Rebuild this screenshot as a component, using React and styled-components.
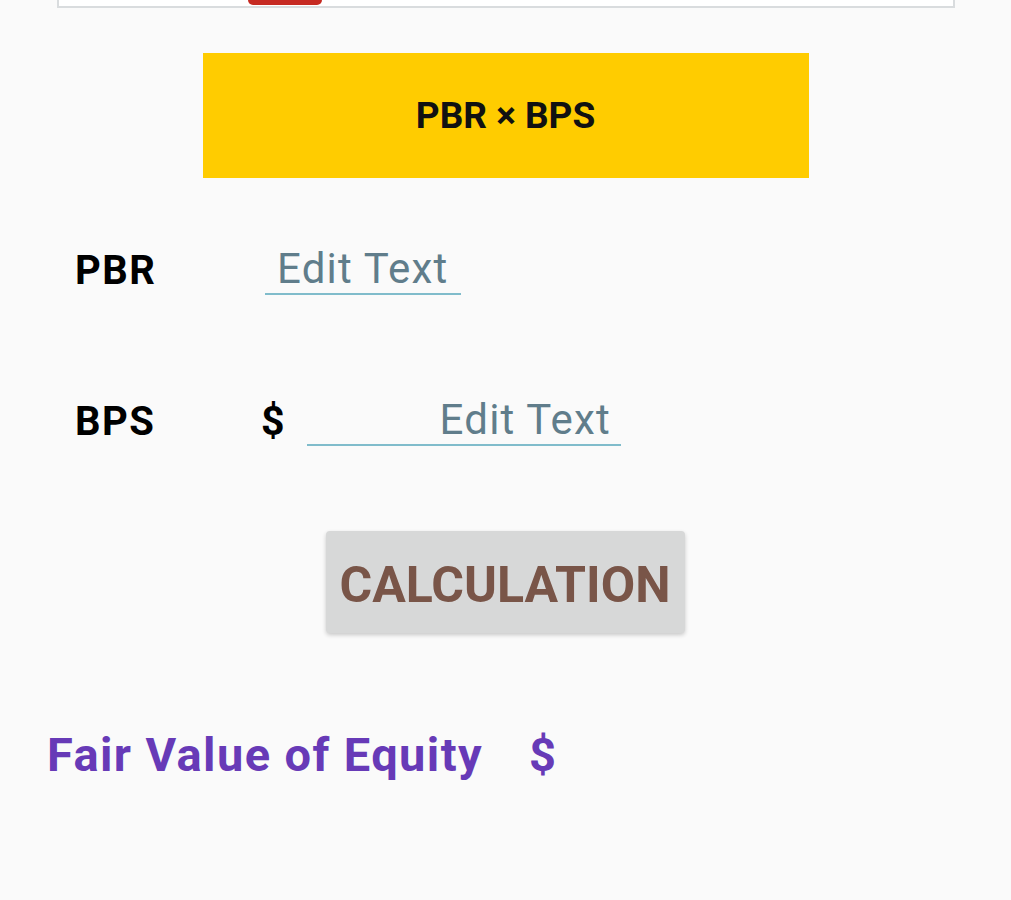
import React from "react";
import styled, { createGlobalStyle } from "styled-components";

const App = () => {
  return (
    <>
      <GlobalStyle />
      <Page>
        <TopCard>
          <RedTab />
        </TopCard>
        <Banner>PBR × BPS</Banner>
        <Row $top={67}>
          <Label $width={190}>PBR</Label>
          <Field $width={196}>Edit Text</Field>
        </Row>
        <Row $top={101}>
          <Label $width={186}>BPS</Label>
          <Dollar>$</Dollar>
          <Field $width={314} $end>
            Edit Text
          </Field>
        </Row>
        <CalcButton>CALCULATION</CalcButton>
        <Result>
          <span>Fair Value of Equity</span>
          <span>$</span>
        </Result>
      </Page>
    </>
  );
};

export default App;

// Style
const GlobalStyle = createGlobalStyle`
  body {
    margin: 0;
    background: #fafafa;
    font-family: Roboto, "Liberation Sans", sans-serif;
  }
`;

const Page = styled.div`
  width: 1011px;
  min-height: 900px;
  display: flex;
  flex-direction: column;
  align-items: stretch;
`;

const TopCard = styled.div`
  margin: 0 56px 0 57px;
  height: 6px;
  background: #fff;
  border: 2px solid #d9dcde;
  border-top: none;
  display: flex;
  padding-left: 189px;
`;

const RedTab = styled.div`
  width: 74px;
  height: 5px;
  background: #c62a22;
  border-radius: 0 0 10px 10px;
`;

const Banner = styled.div`
  align-self: center;
  margin-top: 45px;
  width: 606px;
  height: 125px;
  background: #ffcc00;
  display: flex;
  align-items: center;
  justify-content: center;
  font-size: 37px;
  font-weight: 700;
  color: #111;
`;

const Row = styled.div`
  display: flex;
  align-items: center;
  margin-top: ${(p) => p.$top}px;
  padding-left: 75px;
  height: 50px;
`;

const Label = styled.div`
  width: ${(p) => p.$width}px;
  font-size: 40px;
  font-weight: 700;
  letter-spacing: 1.5px;
  color: #000;
`;

const Dollar = styled.div`
  width: 46px;
  font-size: 41px;
  font-weight: 700;
  color: #000;
`;

const Field = styled.div`
  width: ${(p) => p.$width}px;
  box-sizing: border-box;
  padding: 0 10px 0 12px;
  font-size: 42px;
  line-height: 48px;
  letter-spacing: 1.2px;
  white-space: nowrap;
  color: #607d8b;
  text-align: ${(p) => (p.$end ? "right" : "left")};
  border-bottom: 2px solid #80bccb;
`;

const CalcButton = styled.button`
  align-self: center;
  margin: 85px 0 0 -1px;
  width: 359px;
  height: 102px;
  border: none;
  border-radius: 4px;
  background: #d7d8d8;
  box-shadow: 0 2px 4px rgba(0, 0, 0, 0.2);
  font-family: Roboto, "Liberation Sans", sans-serif;
  font-size: 50px;
  font-weight: 700;
  color: #795548;
  padding: 6px 0 0;
`;

const Result = styled.div`
  display: flex;
  gap: 46px;
  margin-top: 94px;
  padding-left: 47px;
  font-size: 47px;
  font-weight: 700;
  letter-spacing: 1.4px;
  color: #673ab7;
`;
